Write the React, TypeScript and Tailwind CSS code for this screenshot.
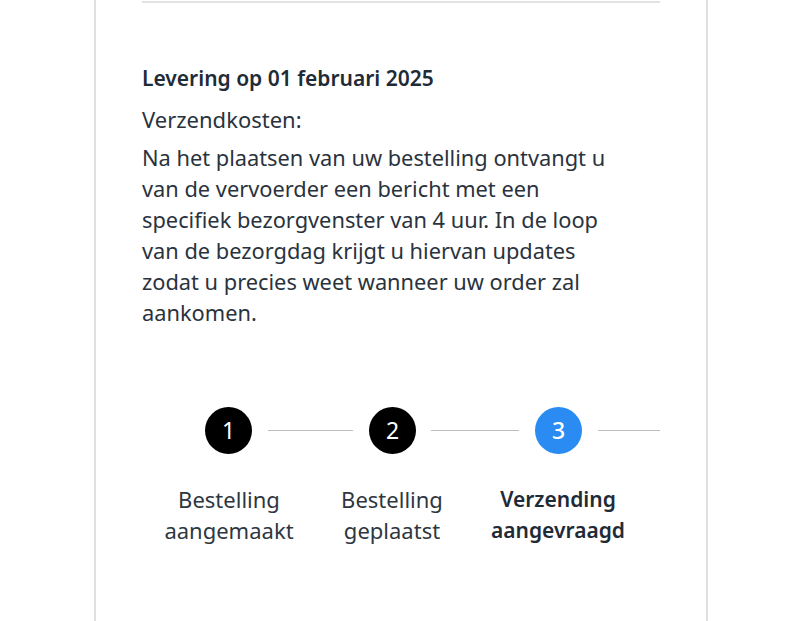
import React from 'react'

const font = { fontFamily: '"Noto Sans", "Open Sans", sans-serif' }

const Circle = ({ n, active = false }: { n: number; active?: boolean }) => (
  <div
    className={`w-[47px] h-[47px] shrink-0 rounded-full flex items-center justify-center text-white text-[23px] ${
      active ? 'bg-[#2a8bf2] font-medium' : 'bg-black'
    }`}
  >
    {n}
  </div>
)

const Line = ({ className }: { className: string }) => (
  <div className={`h-[1.5px] bg-[#bdbdbd] ${className}`} />
)

export default function App() {
  return (
    <div className="w-[800px] h-[621px] bg-white overflow-hidden" style={font}>
      <div className="ml-[94px] w-[614px] h-full border-x-2 border-[#e0e0e0] px-[46px]">
        <div className="border-b-2 border-[#e2e2e2] h-[3px]" />

        <div className="pt-[60px] text-[#1f2b37]">
          <h1 className="text-[21px] font-semibold leading-[31px]">Levering op 01 februari 2025</h1>
          <p className="mt-[10px] text-[22px] leading-[31px] text-[#2a333d]">Verzendkosten:</p>
          <p className="mt-[7px] text-[21.8px] leading-[31px] text-[#2a333d] pr-[40px]">
            Na het plaatsen van uw bestelling ontvangt u van de vervoerder een bericht met een
            specifiek bezorgvenster van 4 uur. In de loop van de bezorgdag krijgt u hiervan updates
            zodat u precies weet wanneer uw order zal aankomen.
          </p>
        </div>

        <div className="mt-[79px]">
          <div className="flex items-center ml-[63px]">
            <Circle n={1} />
            <Line className="ml-[16px] w-[85px] mr-[16px]" />
            <Circle n={2} />
            <Line className="ml-[15px] w-[88px] mr-[16px]" />
            <Circle n={3} active />
            <Line className="ml-[16px] flex-1" />
          </div>

          <div className="flex mt-[30px] text-[22px] leading-[31px] text-center">
            <div className="ml-[17px] w-[140px] text-[#2e3740]">
              Bestelling
              <br />
              aangemaakt
            </div>
            <div className="ml-[23px] w-[140px] text-[#2e3740]">
              Bestelling
              <br />
              geplaatst
            </div>
            <div className="ml-[26px] w-[140px] text-[21px] font-semibold text-[#1f2b37]">
              Verzending
              <br />
              aangevraagd
            </div>
          </div>
        </div>
      </div>
    </div>
  )
}
